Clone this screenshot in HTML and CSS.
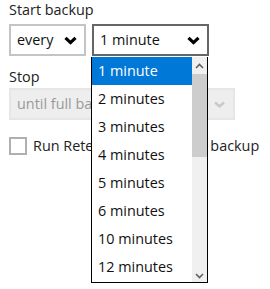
FILE: index.html
```html
<!DOCTYPE html>
<html>
<head>
<meta charset="utf-8">
<link rel="stylesheet" href="styles.css">
</head>
<body>
<div class="page">
  <div class="label">Start backup</div>
  <div class="row">
    <div class="select every">
      <span>every</span>
      <svg class="chev" width="13" height="9" viewBox="0 0 13 9"><path d="M1.5 1.8 L6.5 6.6 L11.5 1.8" fill="none" stroke="#000" stroke-width="3.2"/></svg>
    </div>
    <div class="select minute">
      <span>1 minute</span>
      <svg class="chev" width="13" height="9" viewBox="0 0 13 9"><path d="M1.5 1.8 L6.5 6.6 L11.5 1.8" fill="none" stroke="#000" stroke-width="3.2"/></svg>
    </div>
  </div>
  <div class="label stop">Stop</div>
  <div class="select disabled">
    <span>until full backup</span>
    <svg class="chev" width="13" height="9" viewBox="0 0 13 9"><path d="M2 2.5 L6.5 6.5 L11 2.5" fill="none" stroke="#c8c8c8" stroke-width="2.4"/></svg>
  </div>
  <div class="check">
    <span class="box"></span>
    <span>Run Retention Policy after backup</span>
  </div>

  <div class="dropdown">
    <div class="list">
      <div class="item current">1 minute</div>
      <div class="item">2 minutes</div>
      <div class="item">3 minutes</div>
      <div class="item">4 minutes</div>
      <div class="item">5 minutes</div>
      <div class="item">6 minutes</div>
      <div class="item">10 minutes</div>
      <div class="item">12 minutes</div>
    </div>
    <div class="scrollbar">
      <div class="sb-btn"><svg width="9" height="6" viewBox="0 0 9 6"><path d="M1 5 L4.5 1.5 L8 5" fill="none" stroke="#606060" stroke-width="1.6"/></svg></div>
      <div class="thumb"></div>
      <div class="track"></div>
      <div class="sb-btn bottom"><svg width="9" height="6" viewBox="0 0 9 6"><path d="M1 1 L4.5 4.5 L8 1" fill="none" stroke="#606060" stroke-width="1.6"/></svg></div>
    </div>
  </div>
</div>
</body>
</html>
```
FILE: styles.css
```css
html, body {
  margin: 0;
  padding: 0;
  background: #fff;
}
body {
  font-family: "Open Sans", "Noto Sans", sans-serif;
  font-size: 14.4px;
  line-height: 20px;
  color: #222;
  width: 270px;
  height: 289px;
  overflow: hidden;
}
.page {
  position: relative;
  padding-left: 9px;
  height: 289px;
}
.label {
  height: 20px;
}
.row {
  display: flex;
  gap: 6px;
  margin-top: 4px;
}
.select {
  box-sizing: border-box;
  height: 32px;
  border: 2px solid #c4c4c4;
  display: flex;
  align-items: center;
  justify-content: space-between;
  padding: 0 7px 0 6px;
  background: #fff;
  color: #111;
}
.select.every {
  width: 77px;
}
.select.minute {
  width: 117px;
  border-color: #666;
}
.stop {
  margin-top: 11px;
}
.select.disabled {
  width: 226px;
  margin-top: 1px;
  background: #eeeeee;
  border-color: #e6e6e6;
  color: #9a9a9a;
  overflow: hidden;
  white-space: nowrap;
}
.chev {
  flex: none;
  display: block;
}
.check {
  display: flex;
  align-items: center;
  gap: 6px;
  margin-top: 16px;
  color: #222;
  white-space: nowrap;
}
.box {
  box-sizing: border-box;
  width: 18px;
  height: 18px;
  border: 2px solid #b0b0b0;
  background: #fff;
}
.dropdown {
  position: absolute;
  left: 91px;
  top: 57px;
  width: 117px;
  height: 226px;
  box-sizing: border-box;
  border: 1px solid #000;
  border-top: none;
  background: #fff;
  display: flex;
  color: #111;
}
.list {
  flex: 1;
}
.item {
  height: 28px;
  line-height: 28px;
  padding-left: 6px;
  white-space: nowrap;
}
.item.current {
  background: #0078d7;
  color: #fff;
}
.scrollbar {
  width: 15px;
  background: #f0f0f0;
  display: flex;
  flex-direction: column;
}
.sb-btn {
  height: 17px;
  display: flex;
  align-items: center;
  justify-content: center;
}
.sb-btn.bottom {
  align-items: flex-end;
  padding-bottom: 3px;
  box-sizing: border-box;
}
.thumb {
  height: 83px;
  background: #cdcdcd;
}
.track {
  flex: 1;
}
```
